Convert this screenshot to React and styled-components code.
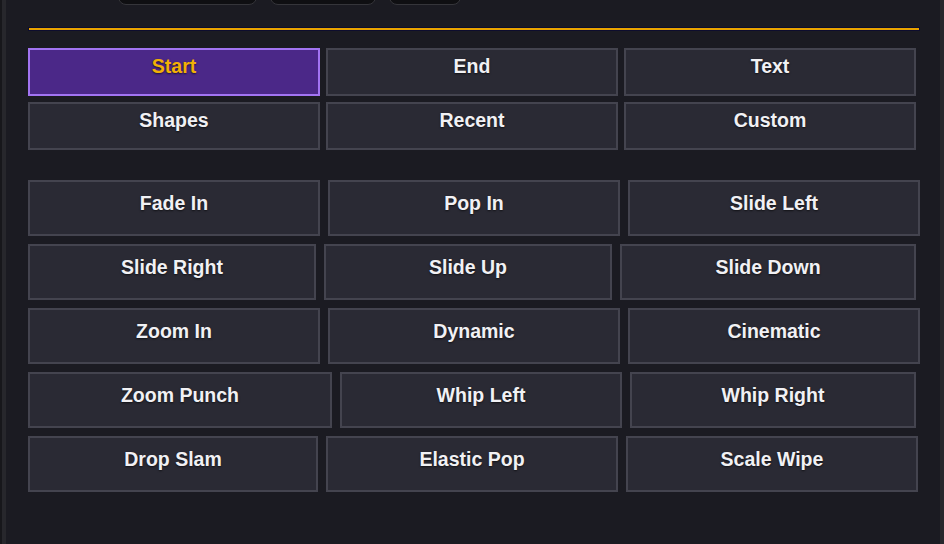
import React from "react";
import styled, { createGlobalStyle } from "styled-components";

const GlobalStyle = createGlobalStyle`
  html, body {
    margin: 0;
    padding: 0;
    background: #17171b;
    overflow: hidden;
  }
  body {
    font-family: "Liberation Sans", Arial, sans-serif;
  }
`;

const Shell = styled.div`
  margin-left: 2px;
  width: 892px;
  height: 544px;
  border-left: 4px solid #27272c;
  border-right: 4px solid #27272c;
  background: #1b1b22;
  padding: 0 20px 0 22px;
  box-sizing: content-box;
  overflow: hidden;
  display: flex;
  flex-direction: column;
`;

const Toolbar = styled.div`
  display: flex;
  margin-top: -25px;
  height: 30px;
  padding-left: 90px;
  gap: 13px;
`;

const ToolButton = styled.div`
  width: ${(p) => p.$w}px;
  height: 30px;
  box-sizing: border-box;
  background: #0f0f12;
  border: 1.5px solid #35353a;
  border-radius: 8px;
`;

const Divider = styled.div`
  margin-top: 22px;
  height: 2px;
  background: #e8a300;
  border: 1px solid #0d0d2e;
`;

const TabGrid = styled.div`
  margin-top: 17px;
  width: 888px;
  display: grid;
  grid-template-columns: repeat(3, 1fr);
  grid-auto-rows: 48px;
  gap: 6px;
`;

const TabButton = styled.button`
  box-sizing: border-box;
  margin: 0;
  padding: 5px 0 0;
  display: flex;
  justify-content: center;
  align-items: flex-start;
  font-family: "Liberation Sans", Arial, sans-serif;
  font-weight: 700;
  font-size: 19.5px;
  line-height: 22px;
  color: ${(p) => (p.$active ? "#f2b005" : "#f1f1f4")};
  background: ${(p) => (p.$active ? "#4b2888" : "#2a2a34")};
  border: 2px solid ${(p) => (p.$active ? "#a274f2" : "#44444f")};
  text-shadow: 0 1px 2px rgba(0, 0, 0, 0.6);
  cursor: pointer;
`;

const AnimList = styled.div`
  margin-top: 30px;
  display: flex;
  flex-direction: column;
  gap: 8px;
`;

const AnimRow = styled.div`
  display: grid;
  grid-template-columns: ${(p) => p.$cols};
  gap: 8px;
  height: 56px;
`;

const AnimButton = styled.button`
  box-sizing: border-box;
  margin: 0;
  padding: 10px 0 0;
  display: flex;
  justify-content: center;
  align-items: flex-start;
  font-family: "Liberation Sans", Arial, sans-serif;
  font-weight: 700;
  font-size: 19.5px;
  line-height: 22px;
  color: #f1f1f4;
  background: #2a2a34;
  border: 2px solid #44444f;
  text-shadow: 0 1px 2px rgba(0, 0, 0, 0.6);
  cursor: pointer;
`;

const tools = [139, 106, 72];

const tabs = ["Start", "End", "Text", "Shapes", "Recent", "Custom"];

const rows = [
  { cols: "292px 292px 292px", items: ["Fade In", "Pop In", "Slide Left"] },
  { cols: "288px 288px 296px", items: ["Slide Right", "Slide Up", "Slide Down"] },
  { cols: "292px 292px 292px", items: ["Zoom In", "Dynamic", "Cinematic"] },
  { cols: "304px 282px 286px", items: ["Zoom Punch", "Whip Left", "Whip Right"] },
  { cols: "290px 292px 292px", items: ["Drop Slam", "Elastic Pop", "Scale Wipe"] },
];

export default function App() {
  const [tab, setTab] = React.useState("Start");
  return (
    <>
      <GlobalStyle />
      <Shell>
        <Toolbar>
          {tools.map((w, i) => (
            <ToolButton key={i} $w={w} />
          ))}
        </Toolbar>
        <Divider />
        <TabGrid>
          {tabs.map((t) => (
            <TabButton key={t} $active={t === tab} onClick={() => setTab(t)}>
              {t}
            </TabButton>
          ))}
        </TabGrid>
        <AnimList>
          {rows.map((r, i) => (
            <AnimRow key={i} $cols={r.cols}>
              {r.items.map((label) => (
                <AnimButton key={label}>{label}</AnimButton>
              ))}
            </AnimRow>
          ))}
        </AnimList>
      </Shell>
    </>
  );
}
